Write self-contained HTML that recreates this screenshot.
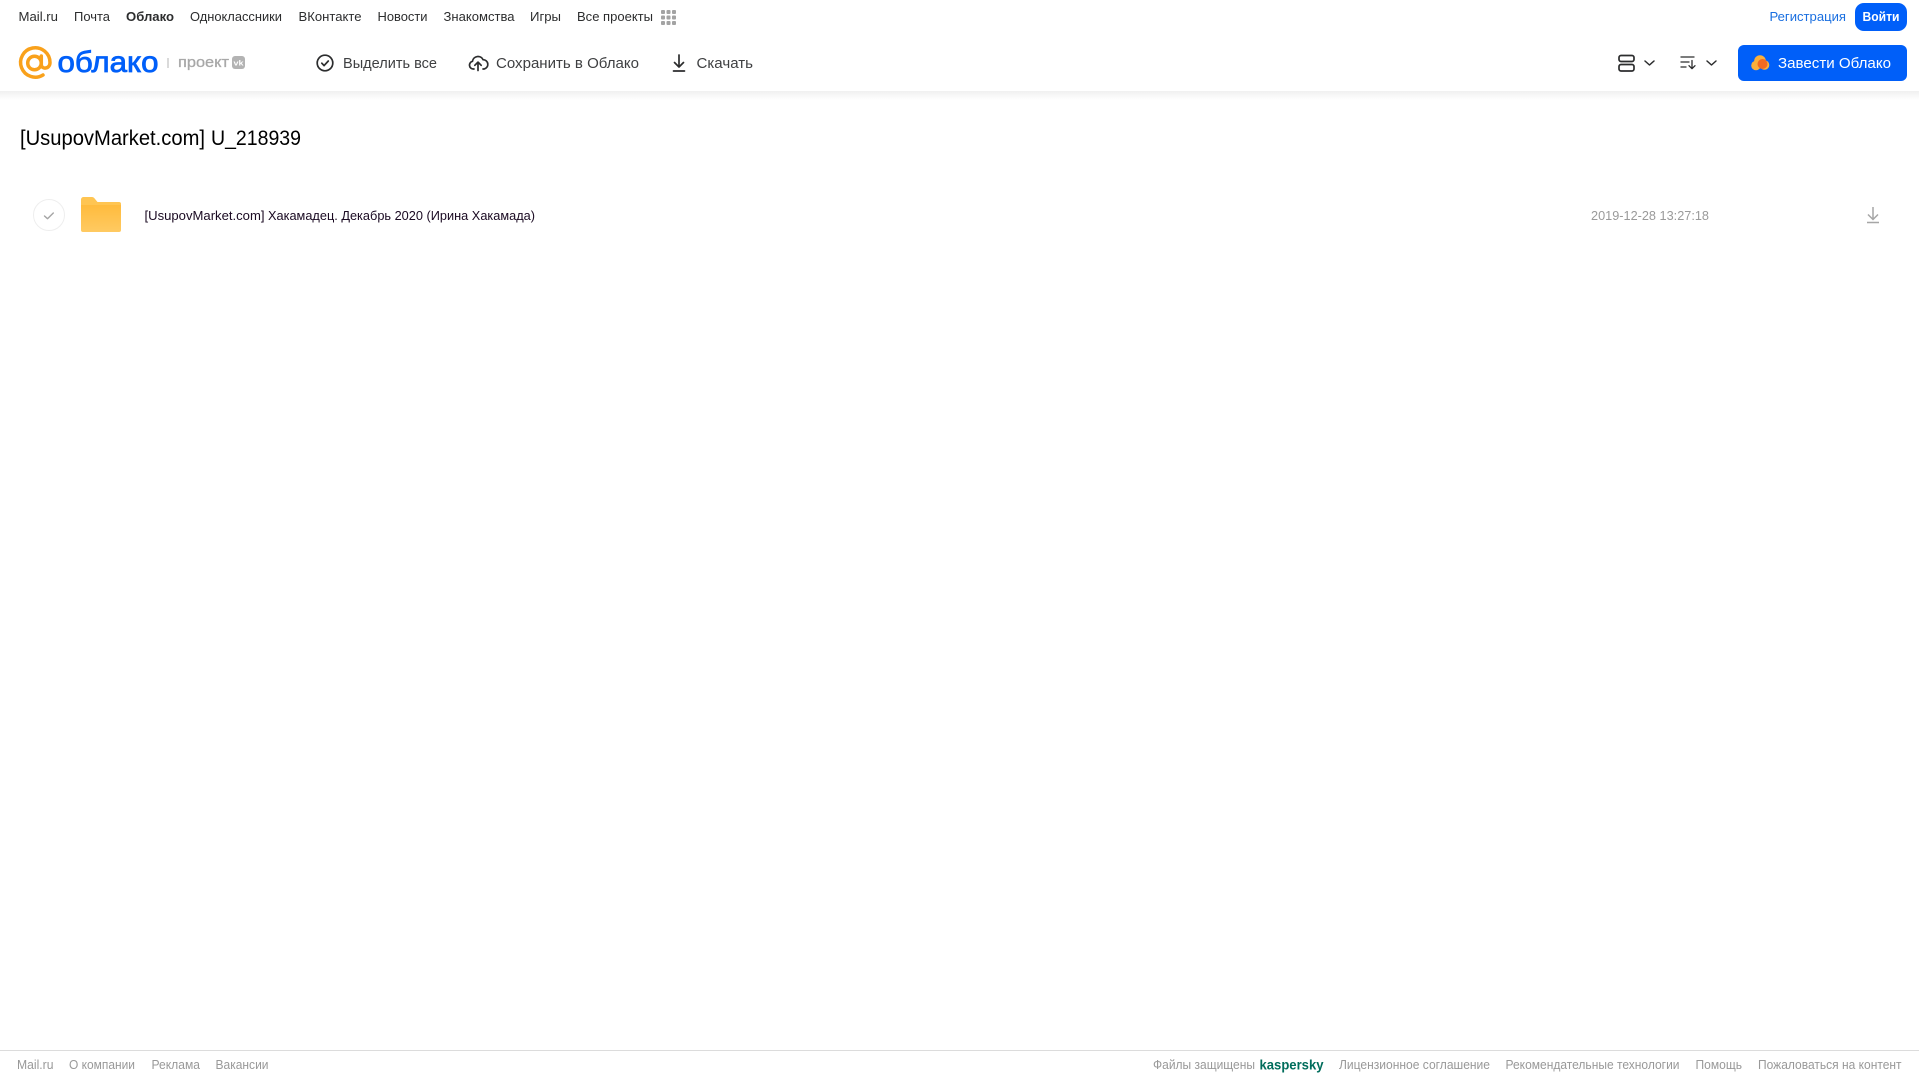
<!DOCTYPE html>
<html lang="ru"><head><meta charset="utf-8"><title>[UsupovMarket.com] U_218939</title>
<style>
html,body{margin:0;padding:0;width:1919px;height:1079px;overflow:hidden;background:#fff}
svg{position:absolute;left:0;top:0;display:block}
text{font-family:"Liberation Sans",sans-serif;dominant-baseline:auto}
.n{font-size:13px;fill:#2c2d2e}
.t{font-size:15px;fill:#3f4042}
.f{font-size:12.5px;fill:#999}
</style></head><body>
<svg width="1919" height="1079" viewBox="0 0 1919 1079" xmlns="http://www.w3.org/2000/svg">
<defs>
<linearGradient id="s" x1="0" y1="0" x2="0" y2="1"><stop offset="0" stop-color="#f0f0f0"/><stop offset="1" stop-color="#fff"/></linearGradient>
<linearGradient id="fb" x1="0" y1="0" x2="0" y2="1"><stop offset="0" stop-color="#ffbb3d"/><stop offset="1" stop-color="#ffca62"/></linearGradient>
</defs>
<rect x="0" y="91" width="1919" height="9" fill="url(#s)"/>

<!-- top nav -->
<g>
<text class="n" x="18.5" y="21" textLength="39.5" lengthAdjust="spacingAndGlyphs">Mail.ru</text>
<text class="n" x="74" y="21" textLength="36" lengthAdjust="spacingAndGlyphs">Почта</text>
<text class="n" x="126" y="21" textLength="48" lengthAdjust="spacingAndGlyphs" font-weight="700">Облако</text>
<text class="n" x="190" y="21" textLength="92" lengthAdjust="spacingAndGlyphs">Одноклассники</text>
<text class="n" x="298.5" y="21" textLength="63" lengthAdjust="spacingAndGlyphs">ВКонтакте</text>
<text class="n" x="377.5" y="21" textLength="50" lengthAdjust="spacingAndGlyphs">Новости</text>
<text class="n" x="443.5" y="21" textLength="71" lengthAdjust="spacingAndGlyphs">Знакомства</text>
<text class="n" x="530" y="21" textLength="31" lengthAdjust="spacingAndGlyphs">Игры</text>
<text class="n" x="577" y="21" textLength="76" lengthAdjust="spacingAndGlyphs">Все проекты</text>
</g>
<g fill="#a3a3a3">
<rect x="661" y="10" width="4" height="4" rx="1"/><rect x="666.5" y="10" width="4" height="4" rx="1"/><rect x="672" y="10" width="4" height="4" rx="1"/>
<rect x="661" y="15.5" width="4" height="4" rx="1"/><rect x="666.5" y="15.5" width="4" height="4" rx="1"/><rect x="672" y="15.5" width="4" height="4" rx="1"/>
<rect x="661" y="21" width="4" height="4" rx="1"/><rect x="666.5" y="21" width="4" height="4" rx="1"/><rect x="672" y="21" width="4" height="4" rx="1"/>
</g>
<text x="1769.500" y="21" font-size="13" fill="#1a6fe0" textLength="76.500" lengthAdjust="spacingAndGlyphs">Регистрация</text>
<rect x="1855" y="3" width="52" height="28" rx="9" fill="#005ff9"/>
<text x="1862.500" y="21" font-size="13" font-weight="700" fill="#fff" textLength="37" lengthAdjust="spacingAndGlyphs">Войти</text>

<!-- logo -->
<g fill="none" stroke="#f9a11b" stroke-width="3.5" stroke-linecap="round">
<circle cx="34.500" cy="63" r="6.800"/>
<path d="M41.300 56v8.500c0 5.300 8.700 4.800 8.700-2a14.700 14.700 0 1 0-7 12.500"/>
</g>
<text x="57.500" y="72" font-size="30" fill="#005ff9" stroke="#005ff9" stroke-width=".8" textLength="101" lengthAdjust="spacingAndGlyphs">облако</text>
<rect x="167.500" y="58" width="1" height="10" fill="#b5b5b5"/>
<text x="178" y="67" font-size="15" fill="#a8a8a8" stroke="#a8a8a8" stroke-width=".3" textLength="51" lengthAdjust="spacingAndGlyphs">проект</text>
<rect x="232" y="56" width="13" height="13" rx="3" fill="#b3b3b3"/>
<text x="233.500" y="65.500" font-size="7.500" font-weight="700" fill="#fff" textLength="10" lengthAdjust="spacingAndGlyphs">vk</text>

<!-- toolbar -->
<g fill="none" stroke="#2c2d2e" stroke-width="1.700" stroke-linecap="round" stroke-linejoin="round">
<circle cx="325" cy="63" r="7.800"/>
<path d="M321.800 63.200l2.300 2.400 4.200-4.600"/>
<path d="M474 69h-.7a3.900 3.900 0 0 1-.8-7.700 5.600 5.600 0 0 1 10.600-1.600 4.700 4.700 0 0 1 1 9.300h-1.100"/>
<path d="M478 70.500v-8M474.800 65.300l3.200-3.200 3.200 3.200"/>
<path d="M679 55v11.500M674.500 62.500l4.500 4.500 4.500-4.500M673.500 71h11"/>
<rect x="1619" y="55.500" width="15" height="6" rx="2"/>
<rect x="1619" y="64.500" width="15" height="6.500" rx="2"/>
<path d="M1645 61l4.500 4 4.500-4" stroke-width="1.500"/>
<path d="M1707 61l4.500 4 4.500-4" stroke-width="1.500"/>
<path d="M1681 57h13M1681 62h8M1681 67h5M1692 60.500v8M1689 65.700l3 3 3-3" stroke-width="1.300"/>
</g>
<text class="t" x="343" y="68" textLength="94" lengthAdjust="spacingAndGlyphs">Выделить все</text>
<text class="t" x="496" y="68" textLength="143" lengthAdjust="spacingAndGlyphs">Сохранить в Облако</text>
<text class="t" x="696.500" y="68" textLength="56.500" lengthAdjust="spacingAndGlyphs">Скачать</text>

<rect x="1738" y="45" width="169" height="36" rx="6" fill="#005ff9"/>
<g>
<circle cx="1756" cy="65.500" r="4.800" fill="#fbb03b"/>
<circle cx="1760" cy="61" r="5.800" fill="#fbb03b"/>
<circle cx="1764.500" cy="65" r="4.800" fill="#fbb03b"/>
<circle cx="1762.500" cy="64" r="5" fill="#f26a21"/>
</g>
<text x="1778" y="68" font-size="15" fill="#fff" textLength="113" lengthAdjust="spacingAndGlyphs">Завести Облако</text>

<!-- title -->
<text x="20" y="145" font-size="21.500" fill="#000" textLength="185" lengthAdjust="spacingAndGlyphs">[UsupovMarket.com]</text>
<text x="211" y="145" font-size="21.500" fill="#000" textLength="90" lengthAdjust="spacingAndGlyphs">U_218939</text>

<!-- row -->
<circle cx="49" cy="215" r="15.500" fill="#fff" stroke="#eeeeee" stroke-width="1"/>
<path d="M44.500 216l3 2.700 5.800-5.700" fill="none" stroke="#a5a5a5" stroke-width="1.400" stroke-linecap="round" stroke-linejoin="round"/>
<path d="M81 199.500a2.500 2.500 0 0 1 2.500-2.500h8.500a3 3 0 0 1 2.200 1l3.300 4H119a2 2 0 0 1 2 2v6H81z" fill="#ffc552"/>
<path d="M81 205h40v25a2 2 0 0 1-2 2H83a2 2 0 0 1-2-2z" fill="url(#fb)"/>
<text x="144.500" y="220" font-size="13" fill="#1a0a22" textLength="120" lengthAdjust="spacingAndGlyphs">[UsupovMarket.com]</text>
<text x="268" y="220" font-size="13" fill="#1a0a22" textLength="267" lengthAdjust="spacingAndGlyphs">Хакамадец. Декабрь 2020 (Ирина Хакамада)</text>
<text x="1591" y="220" font-size="13" fill="#9a9a9a" textLength="118" lengthAdjust="spacingAndGlyphs">2019-12-28 13:27:18</text>
<path d="M1873 207v12.500M1868 214.500l5 5 5-5M1867 222.500h12" fill="none" stroke="#a6a6a6" stroke-width="1.500"/>

<!-- footer -->
<rect x="0" y="1050" width="1919" height="1" fill="#dcdcdc"/>
<g>
<text class="f" x="17" y="1069" textLength="36.500" lengthAdjust="spacingAndGlyphs">Mail.ru</text>
<text class="f" x="69" y="1069" textLength="66" lengthAdjust="spacingAndGlyphs">О компании</text>
<text class="f" x="151.500" y="1069" textLength="48.500" lengthAdjust="spacingAndGlyphs">Реклама</text>
<text class="f" x="215.500" y="1069" textLength="53" lengthAdjust="spacingAndGlyphs">Вакансии</text>
<text class="f" x="1153" y="1069" textLength="102" lengthAdjust="spacingAndGlyphs">Файлы защищены</text>
<text x="1259.500" y="1069.500" font-size="13.500" font-weight="700" fill="#006d5c" textLength="64" lengthAdjust="spacingAndGlyphs">kaspersky</text>
<text class="f" x="1339" y="1069" textLength="151" lengthAdjust="spacingAndGlyphs">Лицензионное соглашение</text>
<text class="f" x="1505.500" y="1069" textLength="174" lengthAdjust="spacingAndGlyphs">Рекомендательные технологии</text>
<text class="f" x="1695.500" y="1069" textLength="46.500" lengthAdjust="spacingAndGlyphs">Помощь</text>
<text class="f" x="1758" y="1069" textLength="143.500" lengthAdjust="spacingAndGlyphs">Пожаловаться на контент</text>
</g>
</svg>
</body></html>
